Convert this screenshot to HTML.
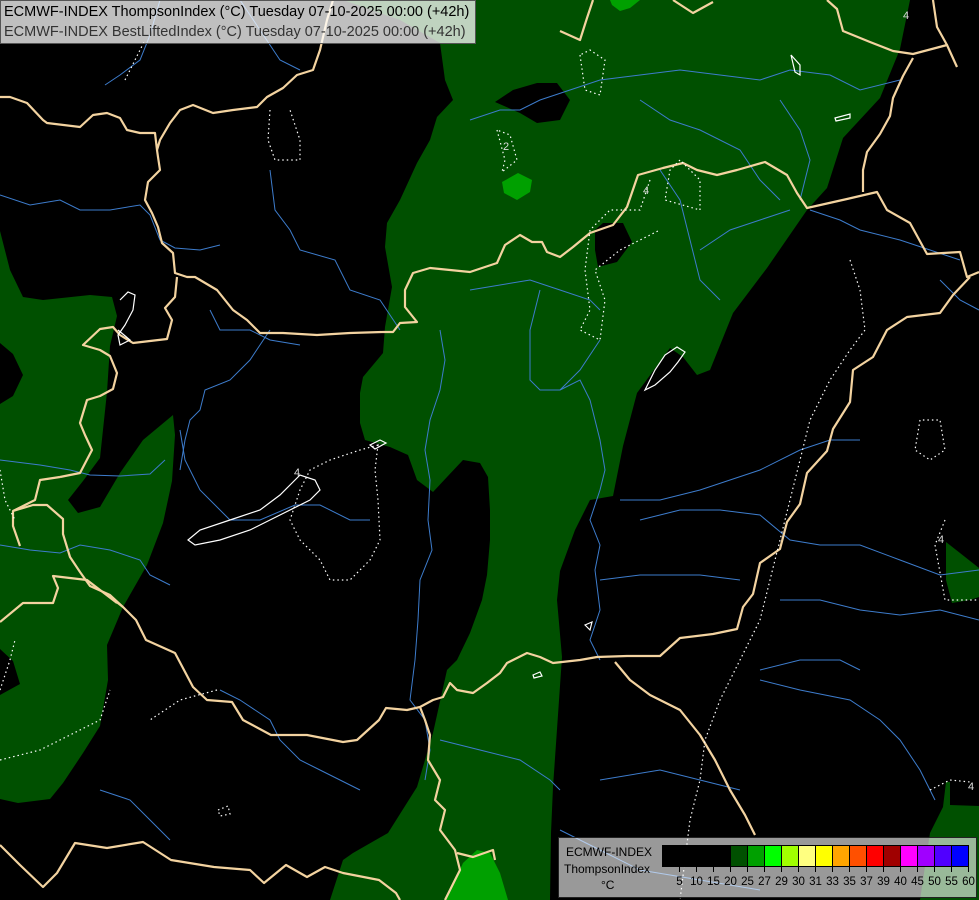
<!DOCTYPE html>
<html><head><meta charset="utf-8"><style>
html,body{margin:0;padding:0;background:#000;}
body{width:979px;height:900px;overflow:hidden;position:relative;font-family:"Liberation Sans",sans-serif;}
svg{position:absolute;left:0;top:0;}
.hdr{position:absolute;left:0;top:0;width:474px;height:42px;background:rgba(255,255,255,0.75);border:1px solid #555;font-size:14.5px;line-height:20px;}
.hdr div{padding-left:3px;white-space:nowrap;}
.leg{position:absolute;left:558px;top:837px;width:417px;height:59px;background:rgba(255,255,255,0.6);border:1px solid #222;}
.lt{position:absolute;font-size:12px;color:#000;white-space:nowrap;}
</style></head><body>
<svg width="979" height="900" viewBox="0 0 979 900">
<g fill="#005000">
<path fill-rule="evenodd" d="M343,0 L910,0 L900,49 L880,98 L843,138 L827,188 L807,210 L767,268 L733,313 L710,370 L697,375 L683,357 L670,348 L637,393 L623,446 L613,496 L590,500 L575,530 L560,571 L557,600 L562,657 L553,787 L551,833 L550,900 L330,900 L343,860 L353,853 L388,833 L417,787 L433,733 L447,670 L457,660 L470,633 L482,600 L487,575 L490,540 L490,510 L488,477 L480,463 L463,460 L447,477 L433,492 L417,480 L408,455 L390,447 L365,440 L360,423 L360,393 L363,377 L383,353 L385,327 L392,287 L385,247 L387,223 L400,200 L417,163 L430,140 L437,117 L453,100 L445,80 L440,43 L400,20 Z
M495,102 L513,90 L537,83 L557,83 L570,100 L560,120 L537,123 L520,113 Z
M595,230 L603,223 L623,223 L632,242 L617,262 L598,267 L595,250 Z"/>
<path fill-rule="evenodd" d="M0,231 L10,270 L23,297 L43,300 L90,295 L112,297 L117,316 L110,346 L107,392 L100,458 L83,481 L68,500 L78,513 L100,507 L120,473 L143,440 L173,415 L175,435 L172,481 L163,523 L147,565 L123,607 L107,645 L108,680 L100,726 L83,753 L63,783 L50,799 L18,803 L0,799 Z
M0,343 L13,354 L23,375 L13,396 L0,404 Z M0,649 L13,661 L20,684 L0,695 Z"/>
<path d="M946,542 L960,553 L979,568 L979,597 L970,600 L952,603 L946,580 Z"/>
<path d="M920,900 L930,833 L943,807 L946,782 L950,782 L950,805 L979,806 L979,900 Z"/>
</g>
<g fill="#00a000">
<path d="M502,182 L518,173 L532,180 L530,192 L517,200 L504,193 Z"/>
<path d="M610,0 L640,0 L630,8 L620,11 L612,5 Z"/>
<path d="M446,900 L463,863 L477,850 L490,853 L500,873 L508,900 Z"/>
</g>
<g fill="none" stroke="#3d7ccc" stroke-width="1">
<path d="M0,195 L30,205 L60,200 L80,210 L110,210 L140,205 L150,215 L160,240 L175,248 L200,250 L220,245"/>
<path d="M270,170 L275,210 L290,230 L300,250 L335,260 L350,290 L380,300 L400,330"/>
<path d="M105,85 L120,75 L140,60 L150,35 L160,0"/>
<path d="M240,0 L260,30 L280,60 L300,70"/>
<path d="M0,545 L30,550 L60,553 L80,545 L110,550 L140,560 L150,575 L170,585"/>
<path d="M0,460 L40,465 L70,470 L90,475 L120,476 L150,474 L165,460"/>
<path d="M180,430 L185,460 L200,490 L230,520 L260,520 L295,505 L320,505 L350,520 L370,520"/>
<path d="M210,310 L220,330 L250,330 L270,340 L300,345"/>
<path d="M270,330 L250,360 L230,380 L205,390 L200,410 L190,420 L185,440 L180,470"/>
<path d="M440,330 L445,360 L440,390 L430,420 L425,450 L430,480 L428,520 L432,550 L420,580 L418,620 L415,660 L410,700 L425,720 L430,750 L425,780"/>
<path d="M470,290 L530,280 L560,290 L590,300 L600,310"/>
<path d="M540,290 L530,330 L530,380 L540,390 L560,390 L580,370 L600,340"/>
<path d="M560,390 L580,380 L590,400 L600,440 L605,470 L600,490"/>
<path d="M600,490 L590,520 L600,545 L595,570 L600,610 L590,640 L600,660"/>
<path d="M470,120 L500,110 L520,110 L540,100 L570,90 L600,80 L640,75 L680,70 L720,75 L760,80 L790,70 L830,75 L860,90 L900,80"/>
<path d="M640,100 L670,120 L700,130 L740,150 L760,180 L780,200"/>
<path d="M660,170 L680,200 L690,240 L700,280 L720,300"/>
<path d="M700,250 L730,230 L760,220 L790,210"/>
<path d="M810,210 L840,220 L860,230 L900,240 L930,250 L960,260"/>
<path d="M620,500 L660,500 L700,490 L730,480 L760,470 L800,450 L830,440 L860,440"/>
<path d="M640,520 L680,510 L720,510 L760,515 L790,540 L820,545 L860,545 L900,560 L940,575 L979,570"/>
<path d="M600,580 L640,575 L700,575 L740,580"/>
<path d="M780,600 L820,600 L860,610 L900,615 L940,610 L979,620"/>
<path d="M760,670 L800,660 L840,660 L860,670"/>
<path d="M760,680 L800,690 L850,700 L880,720 L900,740 L920,770 L935,800"/>
<path d="M600,780 L660,770 L700,780 L740,790"/>
<path d="M440,740 L480,750 L520,760 L550,780 L560,790"/>
<path d="M560,830 L600,850 L640,870 L700,880 L760,890"/>
<path d="M220,690 L240,700 L270,720 L280,740 L300,760 L320,770 L340,780 L360,790"/>
<path d="M100,790 L130,800 L150,820 L170,840"/>
<path d="M940,280 L960,300 L979,310"/>
<path d="M780,100 L800,130 L810,160 L800,200"/>
</g>
<g fill="none" stroke="#f3d3a0" stroke-width="2.2" stroke-linejoin="round">
<path d="M0,97 L10,97 L27,103 L43,120 L47,123 L80,127 L93,115 L107,113 L120,118 L127,130 L140,133 L155,133 L157,150 L160,140 L170,123 L180,110 L193,105 L213,113 L233,110 L257,107 L267,97 L283,88 L297,75 L313,70 L320,50 L327,20 L333,0"/>
<path d="M157,150 L158,157 L160,170 L148,182 L145,200 L152,213 L158,227 L162,243 L173,253 L175,273 L187,277 L195,277 L217,290 L233,310 L247,320 L260,333 L283,333 L317,335 L350,333 L383,332 L393,332 L400,323 L417,322 L405,307 L405,290 L413,273 L430,268 L470,272 L497,263 L505,245 L520,235 L532,242 L542,242 L547,252 L560,257 L573,247 L590,233 L613,225 L627,207 L638,175 L663,168 L683,163 L697,170 L717,175 L737,170 L765,162 L787,175 L797,193 L807,208 L847,199 L877,192 L887,210 L910,223 L927,254 L960,252 L967,277 L979,272"/>
<path d="M970,277 L953,295 L940,313 L907,317 L887,330 L873,357 L853,370 L850,402 L833,429 L827,451 L807,473 L800,504 L787,522 L780,549 L760,563 L753,594 L743,607 L737,629 L713,634 L680,638 L660,656 L627,656 L597,657 L580,660 L553,663 L540,657 L527,653 L507,663 L500,673 L487,683 L473,693 L457,690 L450,683 L443,697 L433,700 L420,707 L407,710 L386,708 L379,720 L357,740 L343,742 L307,735 L271,735 L243,720 L232,702 L207,700 L193,687 L175,653 L146,640 L136,620 L123,607 L110,595 L90,586 L80,572 L70,557 L63,534 L63,519 L47,505 L33,505 L13,511 L13,526 L20,546"/>
<path d="M123,607 L114,600"/>
<path d="M420,707 L425,720 L430,735 L428,760 L440,780 L435,800 L445,810 L440,830 L455,850 L460,870 L450,890 L445,900"/>
<path d="M457,853 L473,857 L493,850 L495,860"/>
<path d="M0,845 L20,865 L43,887 L57,873 L75,843 L107,848 L143,842 L171,860 L214,867 L250,870 L264,883 L286,865 L307,877 L325,867 L343,873 L379,880 L396,893 L400,900"/>
<path d="M615,662 L630,680 L650,695 L680,710 L700,735 L715,760 L730,790 L745,815 L755,835"/>
<path d="M60,477 L80,473 L92,450 L85,435 L80,423 L87,400 L100,396 L113,389 L117,373 L110,356 L100,350 L83,345 L100,329 L113,327 L120,335 L133,343 L167,339 L172,320 L165,308 L175,297 L177,277"/>
<path d="M60,477 L40,480 L35,500 L13,511"/>
<path d="M0,622 L23,603 L53,603 L58,588 L53,576 L87,580 L117,603"/>
<path d="M560,31 L580,40 L587,18 L593,0"/>
<path d="M673,0 L693,13 L713,2"/>
<path d="M827,0 L837,9 L843,31 L870,42 L893,51 L913,54 L947,45 L957,67"/>
<path d="M933,0 L937,27 L947,45"/>
<path d="M913,58 L903,76 L893,98 L890,116 L880,134 L867,152 L863,170 L863,192"/>
</g>
<g fill="none" stroke="#fff" stroke-width="1.2" stroke-dasharray="1.5,3">
<path d="M125,80 L135,60 L145,40"/>
<path d="M270,110 L268,140 L275,160 L300,160 L300,140 L290,110"/>
<path d="M580,55 L585,90 L600,95 L605,60 L590,50 Z"/>
<path d="M497,130 L505,160 L502,172 L517,160 L510,135 Z"/>
<path d="M650,180 L640,210 L610,210 L590,230 L585,270 L590,310 L580,330 L600,340 L605,300 L595,270 L620,250 L660,230"/>
<path d="M680,160 L670,170 L665,200 L700,210 L700,180 Z"/>
<path d="M378,445 L360,450 L330,460 L310,470 L300,490 L290,520 L300,540 L320,560 L330,580 L350,580 L370,560 L380,540 L378,500 L375,470 Z"/>
<path d="M0,760 L40,750 L70,735 L100,720 L110,690"/>
<path d="M0,470 L5,500 L15,520"/>
<path d="M0,690 L10,660 L15,640"/>
<path d="M850,260 L860,290 L865,330 L850,350 L830,380 L810,420 L800,460 L790,500 L780,540 L770,580 L760,620 L740,660 L720,700 L705,740 L700,780 L690,820 L685,860 L680,900"/>
<path d="M920,420 L915,450 L930,460 L945,450 L940,420 Z"/>
<path d="M945,520 L935,545 L945,600 L979,600"/>
<path d="M930,790 L950,780 L970,782"/>
<path d="M218,810 L228,806 L230,814 L220,816 Z"/>
<path d="M217,690 L180,700 L150,720"/>
</g>
<g fill="none" stroke="#fff" stroke-width="1.2">
<path d="M188,540 L200,530 L230,520 L260,510 L280,495 L300,475 L315,480 L320,490 L310,500 L280,515 L250,530 L220,540 L195,545 Z"/>
<path d="M120,300 L128,292 L135,295 L133,310 L125,325 L118,335 L120,345 L130,340 L118,330"/>
<path d="M645,390 L655,370 L665,355 L677,347 L685,352 L678,362 L670,372 L655,385 Z"/>
<path d="M370,445 L380,440 L386,443 L375,449 Z"/>
<path d="M791,55 L800,65 L800,75 L795,72 Z"/>
<path d="M835,118 L850,114 L850,118 L836,121 Z"/>
<path d="M585,625 L592,622 L590,630 Z"/>
<path d="M533,675 L540,672 L542,676 L534,678 Z"/>
</g>
<g fill="#ddd" font-family="Liberation Sans,sans-serif" font-size="11">
<text x="503" y="150">2</text><text x="643" y="194">4</text><text x="938" y="543">4</text><text x="968" y="790">4</text><text x="903" y="19">4</text><text x="294" y="476">4</text>
</g>
</svg>
<div class="hdr"><div style="color:#000;margin-top:1px">ECMWF-INDEX ThompsonIndex (°C) Tuesday 07-10-2025 00:00 (+42h)</div><div style="color:#333">ECMWF-INDEX BestLiftedIndex (°C) Tuesday 07-10-2025 00:00 (+42h)</div></div>
<div class="leg"></div>
<div class="lt" style="left:566px;top:845px;">ECMWF-INDEX</div>
<div class="lt" style="left:564px;top:862px;">ThompsonIndex</div>
<div class="lt" style="left:601px;top:878px;">°C</div>
<svg width="979" height="900" viewBox="0 0 979 900" style="pointer-events:none">
<g stroke="#000" stroke-width="1">
<rect x="662.5" y="845.5" width="17" height="21" fill="#000"/>
<rect x="679.5" y="845.5" width="17" height="21" fill="#000"/>
<rect x="696.5" y="845.5" width="17" height="21" fill="#000"/>
<rect x="713.5" y="845.5" width="17" height="21" fill="#000"/>
<rect x="730.5" y="845.5" width="17" height="21" fill="#005000"/>
<rect x="747.5" y="845.5" width="17" height="21" fill="#00a000"/>
<rect x="764.5" y="845.5" width="17" height="21" fill="#00ff00"/>
<rect x="781.5" y="845.5" width="17" height="21" fill="#a0ff00"/>
<rect x="798.5" y="845.5" width="17" height="21" fill="#ffff80"/>
<rect x="815.5" y="845.5" width="17" height="21" fill="#ffff00"/>
<rect x="832.5" y="845.5" width="17" height="21" fill="#ffa500"/>
<rect x="849.5" y="845.5" width="17" height="21" fill="#ff5000"/>
<rect x="866.5" y="845.5" width="17" height="21" fill="#ff0000"/>
<rect x="883.5" y="845.5" width="17" height="21" fill="#a00000"/>
<rect x="900.5" y="845.5" width="17" height="21" fill="#ff00ff"/>
<rect x="917.5" y="845.5" width="17" height="21" fill="#a000ff"/>
<rect x="934.5" y="845.5" width="17" height="21" fill="#5000ff"/>
<rect x="951.5" y="845.5" width="17" height="21" fill="#0000ff"/>
<path d="M679.5,866 v6 M696.5,866 v6 M713.5,866 v6 M730.5,866 v6 M747.5,866 v6 M764.5,866 v6 M781.5,866 v6 M798.5,866 v6 M815.5,866 v6 M832.5,866 v6 M849.5,866 v6 M866.5,866 v6 M883.5,866 v6 M900.5,866 v6 M917.5,866 v6 M934.5,866 v6 M951.5,866 v6 M968.5,866 v6"/>
</g>
<g fill="#000" font-family="Liberation Sans,sans-serif" font-size="11.5" text-anchor="middle">
<text x="679.5" y="885">5</text><text x="696.5" y="885">10</text><text x="713.5" y="885">15</text><text x="730.5" y="885">20</text><text x="747.5" y="885">25</text><text x="764.5" y="885">27</text><text x="781.5" y="885">29</text><text x="798.5" y="885">30</text><text x="815.5" y="885">31</text><text x="832.5" y="885">33</text><text x="849.5" y="885">35</text><text x="866.5" y="885">37</text><text x="883.5" y="885">39</text><text x="900.5" y="885">40</text><text x="917.5" y="885">45</text><text x="934.5" y="885">50</text><text x="951.5" y="885">55</text><text x="968.5" y="885">60</text>
</g>
</svg>
</body></html>
